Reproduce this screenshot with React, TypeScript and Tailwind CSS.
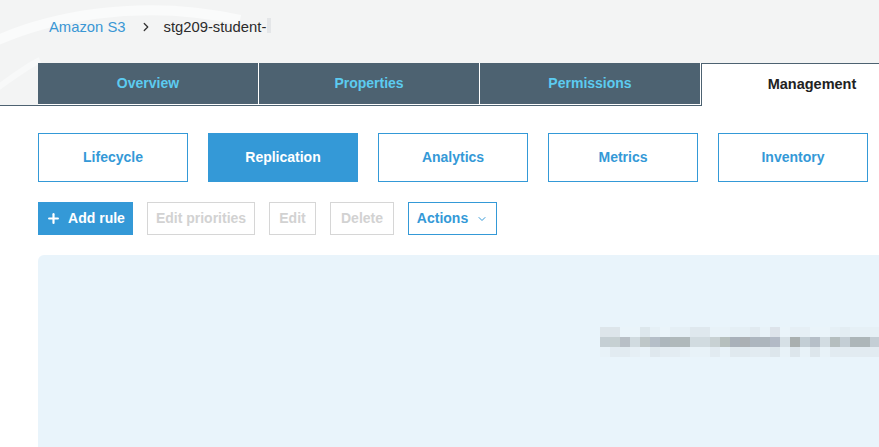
import { ChevronDown, ChevronRight, Plus } from "lucide-react";

const tabs = ["Overview", "Properties", "Permissions"];
const subTabs = ["Lifecycle", "Replication", "Analytics", "Metrics", "Inventory"];

// pixelated (blurred) text, three rows of 10px cells
const blurRows = [
  ["#dde5ea", "#dde5ea", "#eaf4fa", "#eaf4fa", "#dde7ec", "#e6f0f6", "#eaf4fa", "#e5eff5", "#e5eff5", "#dfe8ee", "#dfe8ee", "#e8f2f8", "#e8f2f8", "#e5eff5", "#e5eff5", "#e1eaf0", "#e8f2f8", "#dde3ea", "#eaf4fa", "#e6eff5", "#e6eff5", "#eaf4fa", "#eaf4fa", "#e6f0f6", "#e3edf3", "#e6f0f6", "#e6f0f6", "#e6f0f6"],
  ["#c5cfd4", "#c6d0d2", "#b8bfc6", "#d1dbe0", "#bec7c8", "#b5bec8", "#adb7bd", "#b0b9bb", "#b0b9bb", "#d1dbe0", "#d1dbe0", "#c8d1d3", "#b6bfbd", "#a9b1ba", "#abb0b4", "#adb6bf", "#adb6bd", "#b3bac6", "#d6e0e6", "#a9afaf", "#c3ced5", "#b6bfc8", "#d2dce2", "#b5bebf", "#c4ced5", "#adb6b9", "#adb6b9", "#c4ced5"],
  ["#e8f2f8", "#e2ebf1", "#e2ebf1", "#e6eff5", "#e8f2f8", "#dfe8ee", "#e3ecf2", "#e3ecf2", "#e6eff5", "#e8f2f8", "#e8f2f8", "#e2ebf1", "#e8f2f8", "#e0e9ef", "#e0e9ef", "#e2ebf1", "#e2ebf1", "#dde6ec", "#e8f2f8", "#dde6ec", "#e8f2f8", "#dde6ec", "#e8f2f8", "#e2ebf1", "#e2ebf1", "#e2ebf1", "#e2ebf1", "#e2ebf1"],
];

export default function App() {
  return (
    <div className="h-[447px] w-full overflow-hidden bg-white font-['Liberation_Sans',Arial,sans-serif]">
      <div className="relative bg-[#f3f4f4]">
        <svg className="pointer-events-none absolute left-0 top-0" width="260" height="105" viewBox="0 0 260 105" fill="none">
          <path d="M-40 60 C 40 10, 150 0, 240 20" stroke="#fafbfb" strokeWidth="10" />
          <path d="M-20 100 C 10 80, 20 70, 40 60" stroke="#f8f9f9" strokeWidth="6" />
        </svg>
        <div className="relative flex h-[63px] items-start pl-[49px] pt-[18px] text-[14.8px] leading-[18px]">
          <span className="text-[#3a97d4]">Amazon S3</span>
          <ChevronRight className="ml-[13px] mr-[11px] mt-[2px] h-[14px] w-[14px] text-[#333]" strokeWidth={2.2} />
          <span className="text-[#2b2b2b]">stg209-student-</span>
          <span className="ml-[1px] h-[15px] w-[4px] bg-[#e4e6e8]" />
        </div>
        <div className="relative flex items-end">
          <div className="flex shrink-0 border-b border-[#4d6271] pl-[38px]">
            {tabs.map((t) => (
              <div key={t} className="flex h-[42px] w-[221px] shrink-0 items-center justify-center border-b border-r border-b-white border-r-white bg-[#4d6271] text-[14px] font-bold text-[#5ccbf0]">
                {t}
              </div>
            ))}
          </div>
          <div className="flex h-[43px] w-[221px] shrink-0 items-center justify-center border-l border-t border-[#4d6271] bg-white text-[14.5px] font-bold text-[#222]">
            Management
          </div>
          <div className="h-[43px] flex-1 bg-white" />
        </div>
      </div>

      <div className="flex gap-5 pl-[38px] pt-[27px]">
        {subTabs.map((t) => (
          <div
            key={t}
            className={
              t === "Replication"
                ? "flex h-[49px] w-[150px] items-center justify-center bg-[#3499d7] text-[14px] font-bold text-white"
                : "flex h-[49px] w-[150px] items-center justify-center border border-[#3499d7] text-[14px] font-bold text-[#3499d7]"
            }
          >
            {t}
          </div>
        ))}
      </div>

      <div className="flex gap-[14px] pl-[38px] pt-[20px] text-[14px] font-bold">
        <button className="flex h-[33px] w-[95px] items-center justify-center gap-[7px] bg-[#3499d7] text-white">
          <Plus className="h-[15px] w-[15px]" strokeWidth={3.5} />
          Add rule
        </button>
        <button className="h-[33px] w-[108px] border border-[#d6d6d6] text-[#d2d2d2]">Edit priorities</button>
        <button className="h-[33px] w-[47px] border border-[#d6d6d6] text-[#d2d2d2]">Edit</button>
        <button className="h-[33px] w-[64px] border border-[#d6d6d6] text-[#d2d2d2]">Delete</button>
        <button className="flex h-[33px] w-[89px] items-center justify-center gap-[8px] border border-[#3499d7] text-[#3499d7]">
          Actions
          <ChevronDown className="h-[12px] w-[12px]" strokeWidth={2} />
        </button>
      </div>

      <div className="ml-[38px] mt-[20px] h-[200px] rounded-tl-md bg-[#e9f4fb] pl-[562px] pt-[72px]">
        {blurRows.map((row, i) => (
          <div key={i} className="flex">
            {row.map((c, j) => (
              <div key={j} className="h-[10px] w-[10px] shrink-0" style={{ backgroundColor: c }} />
            ))}
          </div>
        ))}
      </div>
    </div>
  );
}
